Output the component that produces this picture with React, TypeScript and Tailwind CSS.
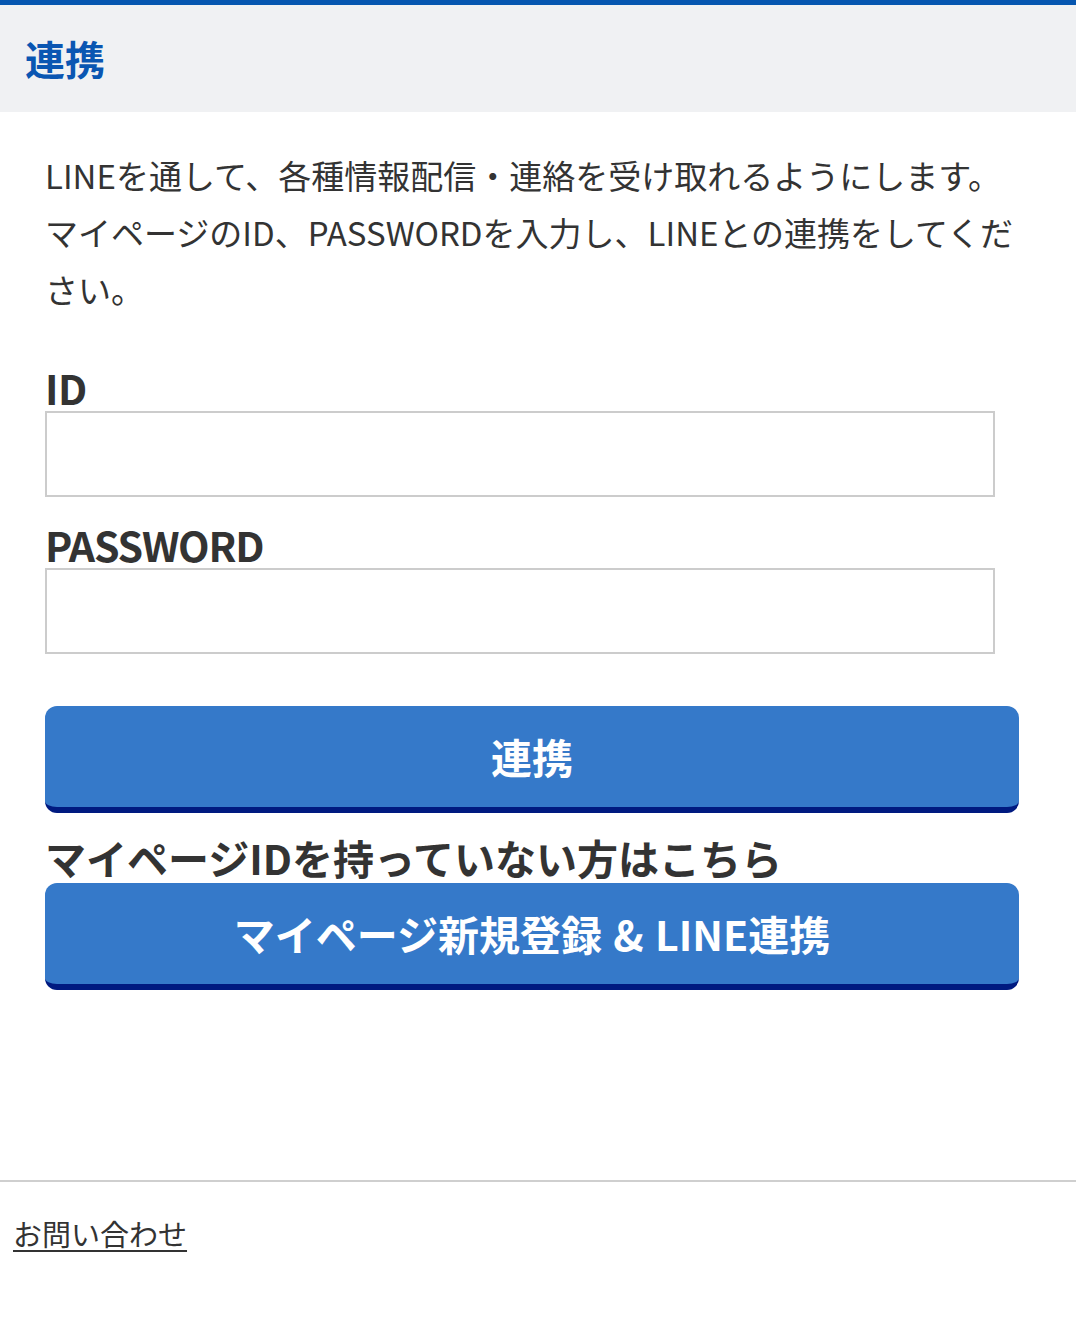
import React from "react";

export default function App() {
  return (
    <div className="w-[1076px] min-h-[1317px] bg-white font-['Noto_Sans_CJK_JP','Noto_Sans',sans-serif] text-[#333333]">
      <div className="h-[5px] bg-[#0656b0]" />
      <div className="h-[107px] bg-[#f0f1f3] flex items-center pl-[25px]">
        <h1 className="text-[40px] font-bold leading-none text-[#0a56b2] -mt-[2px]">連携</h1>
      </div>
      <div className="pl-[45px] pr-[57px]">
        <p className="mt-[35px] text-[33px] leading-[57px] text-[#333333]">
          LINEを通して、各種情報配信・連絡を受け取れるようにします。マイページのID、PASSWORDを入力し、LINEとの連携をしてください。
        </p>
        <label className="block mt-[49px] text-[41px] font-bold leading-[41px] text-[#333333] tracking-[-0.5px]">ID</label>
        <input
          type="text"
          className="block mt-[3px] w-[950px] h-[86px] border-2 border-[#cccccc] bg-white outline-none px-3 text-[33px]"
        />
        <label className="block mt-[27px] text-[41px] font-bold leading-[41px] text-[#333333] tracking-[-1.2px]">PASSWORD</label>
        <input
          type="password"
          className="block mt-[3px] w-[950px] h-[86px] border-2 border-[#cccccc] bg-white outline-none px-3 text-[33px]"
        />
        <button className="block mt-[52px] w-[974px] h-[107px] rounded-[12px] bg-[#3579c9] border-b-[6px] border-[#001a80] text-white text-[41px] font-bold leading-none">
          連携
        </button>
        <p className="mt-[24px] text-[41px] font-bold leading-[41px] text-[#333333]">
          マイページIDを持っていない方はこちら
        </p>
        <button className="block mt-[5px] w-[974px] h-[107px] rounded-[12px] bg-[#3579c9] border-b-[6px] border-[#001a80] text-white text-[41px] font-bold leading-none [word-spacing:2px]">
          マイページ新規登録 &amp; LINE連携
        </button>
      </div>
      <div className="mt-[190px] h-[2px] bg-[#cfcfcf]" />
      <div className="pl-[13px] mt-[37px]">
        <a href="#" className="text-[29px] leading-[29px] text-[#333333] underline underline-offset-[4px] decoration-[2px]">
          お問い合わせ
        </a>
      </div>
    </div>
  );
}
